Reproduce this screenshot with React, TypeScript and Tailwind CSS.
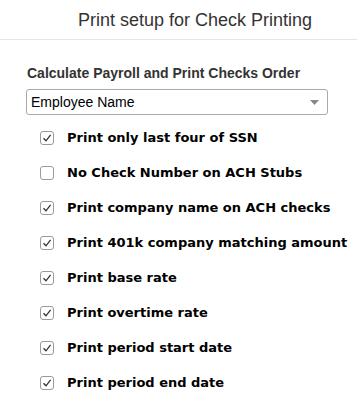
const options = [
  { label: 'Print only last four of SSN', checked: true },
  { label: 'No Check Number on ACH Stubs', checked: false },
  { label: 'Print company name on ACH checks', checked: true },
  { label: 'Print 401k company matching amount', checked: true },
  { label: 'Print base rate', checked: true },
  { label: 'Print overtime rate', checked: true },
  { label: 'Print period start date', checked: true },
  { label: 'Print period end date', checked: true },
];

function CheckBox({ checked }: { checked: boolean }) {
  return (
    <span className="w-[14px] h-[14px] shrink-0 rounded-[3px] border border-[#9a9a9a] bg-white flex items-center justify-center">
      {checked && (
        <svg width="10" height="10" viewBox="0 0 10 10">
          <path d="M1.5 5.2 L4 7.8 L8.6 1.8" fill="none" stroke="#333" strokeWidth="1.3" />
        </svg>
      )}
    </span>
  );
}

export default function App() {
  return (
    <div className="w-[357px] h-[394px] bg-white overflow-hidden font-['Liberation_Sans',Arial,sans-serif] text-[#333]">
      <div className="h-[40px] border-b border-[#e5e5e5] flex items-center pl-[78px]">
        <h1 className="text-[18px] text-[#333] leading-none">Print setup for Check Printing</h1>
      </div>

      <div className="pl-[27px] pr-[29px] pt-[25px]">
        <div className="text-[14px] font-bold text-[#333] leading-[16px]">
          Calculate Payroll and Print Checks Order
        </div>
        <div className="mt-[8px] h-[26px] -ml-px border border-[#aaa] rounded-[3px] flex items-center justify-between pl-[4px] pr-[8px]">
          <span className="text-[14px] text-black">Employee Name</span>
          <svg width="9" height="5" viewBox="0 0 9 5">
            <path d="M0 0 H9 L4.5 5 Z" fill="#888" />
          </svg>
        </div>

        <ul className="mt-[5px] pl-[13px] flex flex-col">
          {options.map((o) => (
            <li key={o.label} className="h-[35px] flex items-center gap-[13px]">
              <CheckBox checked={o.checked} />
              <span className="font-['DejaVu_Sans',Verdana,sans-serif] font-bold text-[13px] text-black whitespace-nowrap">
                {o.label}
              </span>
            </li>
          ))}
        </ul>
      </div>
    </div>
  );
}
